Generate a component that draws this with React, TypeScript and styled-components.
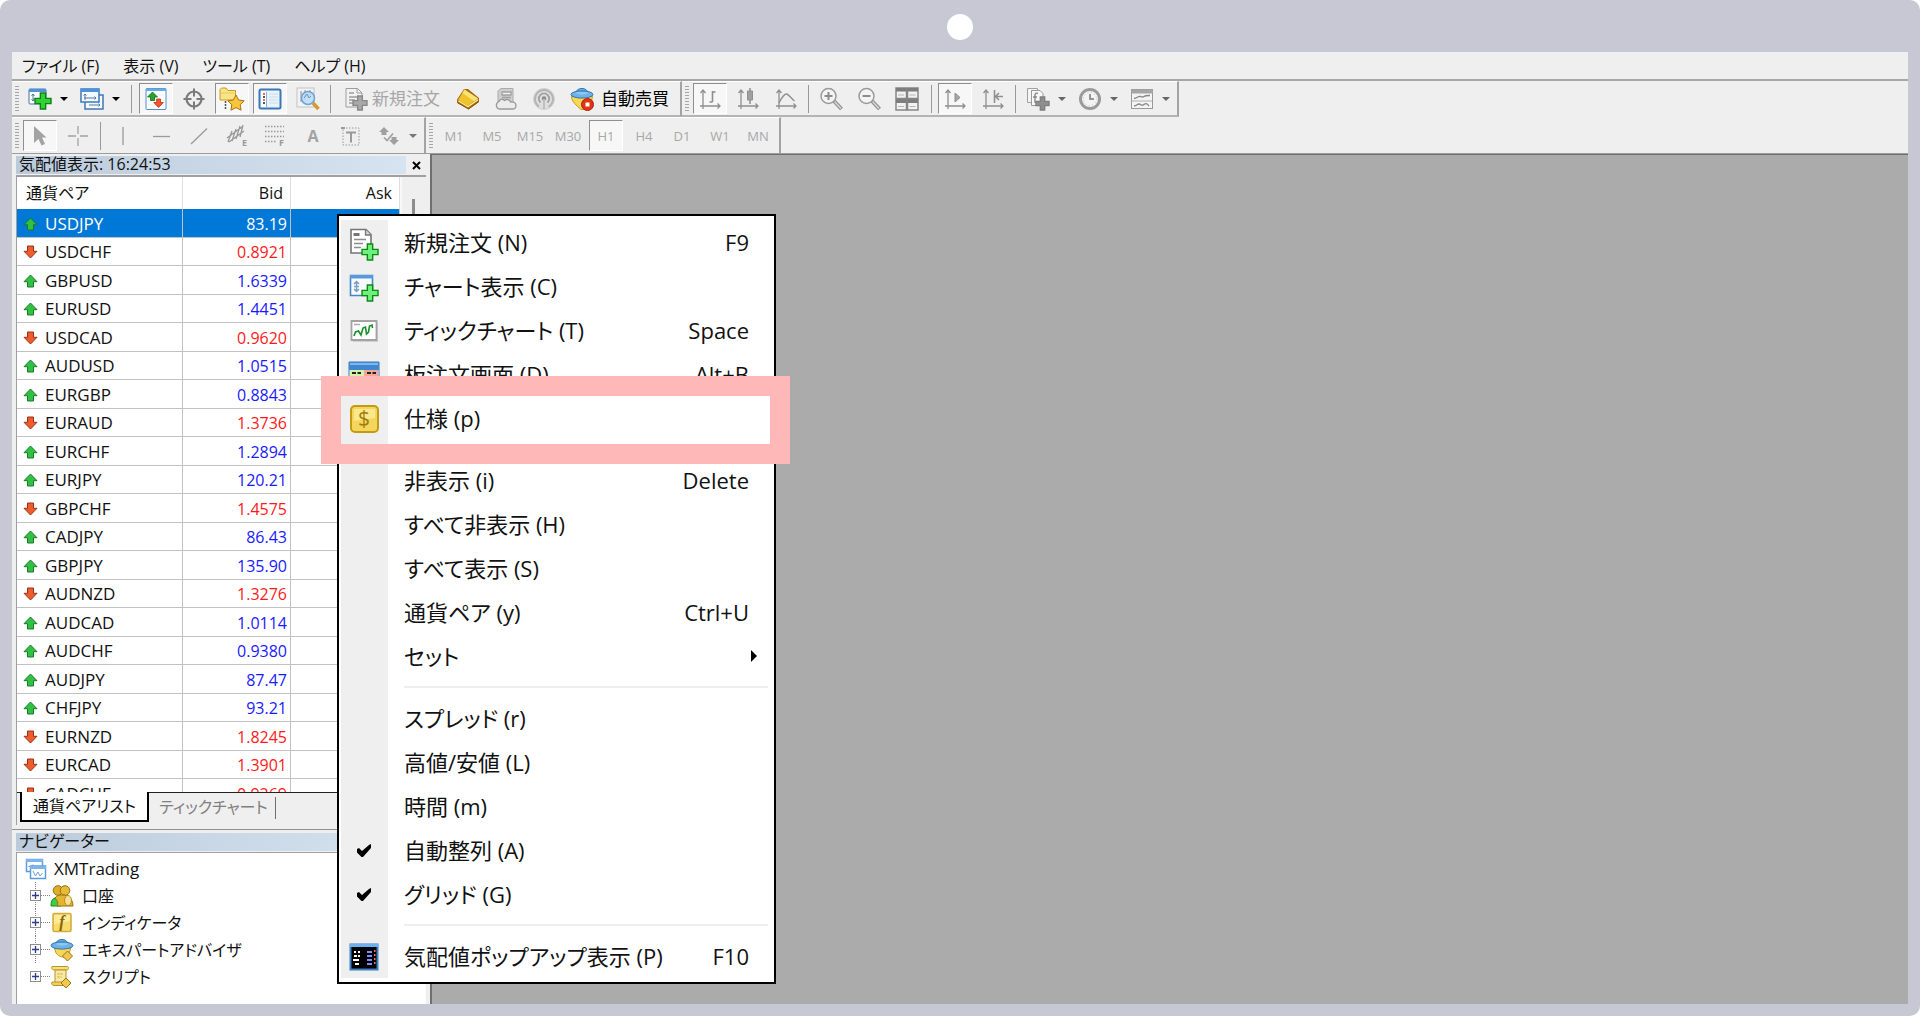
import React from "react";
import styled, { createGlobalStyle } from "styled-components";

const GlobalStyle = createGlobalStyle`
  *, *::before, *::after { box-sizing: border-box; }
  body {
    margin: 0;
    background: #ffffff;
    color: #111111;
    font-family: "Open Sans", "Noto Sans CJK JP", sans-serif;
    font-feature-settings: "palt";
  }
  button {
    font: inherit;
    font-feature-settings: inherit;
    color: inherit;
    background: none;
    border: 0;
    padding: 0;
    margin: 0;
    white-space: nowrap;
  }
  ul { list-style: none; margin: 0; padding: 0; }
  svg { display: block; flex: none; overflow: visible; }
`;

/* ---------- frame ---------- */

const Frame = styled.div`
  display: flex;
  flex-direction: column;
  height: 100vh;
  min-height: 640px;
  padding: 0 12px 12px;
  background: #c8c7d4;
  border-radius: 10px;
`;

const Bezel = styled.div`
  flex: none;
  display: flex;
  align-items: center;
  justify-content: center;
  height: 52px;
  padding-top: 2px;
`;

const Camera = styled.span`
  width: 26px;
  height: 26px;
  border-radius: 50%;
  background: #ffffff;
`;

const Screen = styled.div`
  flex: 1;
  min-height: 0;
  display: flex;
  flex-direction: column;
  background: #efefef;
`;

/* ---------- menu bar and toolbars ---------- */

const MenuBar = styled.nav`
  flex: none;
  display: flex;
  gap: 4px;
  height: 29px;
  border-bottom: 2px solid #a6a6a6;
`;

const MenuBarButton = styled.button`
  padding: 0 10px;
  font-size: 16px;
  line-height: 26px;
`;

const ToolRow = styled.div`
  flex: none;
  display: flex;
  height: 36px;
`;

const ToolGroup = styled.div`
  display: flex;
  align-items: center;
  gap: 4px;
  padding: 0 4px 0 3px;
  border-top: 1px solid #ffffff;
  border-right: 2px solid #a3a3a3;
  border-bottom: 2px solid #b4b4b4;
`;

const LowerToolGroup = styled(ToolGroup)`
  border-bottom: 0;
`;

const Grip = styled.span`
  width: 4px;
  height: 26px;
  background: repeating-linear-gradient(to bottom, #a6a6a6 0 1px, #efefef 1px 3px);
`;

const Divider = styled.span<{ $width?: number }>`
  display: flex;
  justify-content: center;
  width: ${(p) => p.$width ?? 3}px;
  height: 28px;

  &::before {
    content: "";
    width: 1px;
    background: #989898;
  }
`;

const ToolButton = styled.button<{ $pressed?: boolean }>`
  display: flex;
  align-items: center;
  justify-content: center;
  width: 34px;
  height: 31px;
  font-size: 13px;
  color: #a8a8a8;
  border: 1px solid transparent;
  ${(p) =>
    p.$pressed &&
    `
    background: #f7f7f7;
    border-color: #8f8f8f #ffffff #ffffff #8f8f8f;
  `}
`;

const WideToolButton = styled.button<{ $disabled?: boolean }>`
  display: flex;
  align-items: center;
  gap: ${(p) => (p.$disabled ? 4 : 7)}px;
  height: 31px;
  padding: 0 7px 0 ${(p) => (p.$disabled ? 8 : 5)}px;
  font-size: 17px;
  line-height: 24px;
  color: ${(p) => (p.$disabled ? "#a6a6a6" : "#000000")};
`;

const Split = styled.span`
  display: flex;
`;

const SplitArrow = styled.button`
  display: flex;
  align-items: center;
  justify-content: center;
  width: 14px;
  height: 31px;
`;

/* ---------- work area ---------- */

const WorkArea = styled.main`
  position: relative;
  flex: 1;
  min-height: 0;
  display: flex;
  border-top: 1px solid #9c9c9c;
`;

const SidePanel = styled.aside`
  flex: none;
  width: 418px;
  display: flex;
  flex-direction: column;
  min-height: 0;
`;

const Desktop = styled.section`
  flex: 1;
  background: #ababab;
  border-top: 1px solid #6f6f6f;
  border-left: 2px solid #6f6f6f;
`;

const MarketWatch = styled.section`
  flex: 1;
  min-height: 0;
  display: flex;
  flex-direction: column;
  padding: 2px 4px 4px;
  border-bottom: 1px solid #909090;
`;

const Navigator = styled.section`
  flex: none;
  display: flex;
  flex-direction: column;
  height: 174px;
  padding: 3px 4px 0;
`;

const PanelTitle = styled.header`
  flex: none;
  display: flex;
  height: 18px;
  margin-bottom: 1px;
  font-size: 16px;
  line-height: 16px;
`;

const TitleText = styled.h2`
  flex: 1;
  margin: 0;
  padding-left: 3px;
  font-size: inherit;
  font-weight: 400;
  white-space: nowrap;
  background: linear-gradient(to right, #bccbdb, #d6e4f1);
`;

const CloseButton = styled.button`
  display: flex;
  align-items: center;
  justify-content: center;
  width: 20px;
`;

const WatchBody = styled.div`
  flex: 1;
  min-height: 0;
  display: flex;
  overflow: hidden;
  border-top: 2px solid #a0a0a0;
  border-left: 1px solid #a0a0a0;
`;

const QuoteTable = styled.table`
  width: 383px;
  align-self: flex-start;
  table-layout: fixed;
  border-collapse: separate;
  border-spacing: 0;
  background: #ffffff;
  font-size: 16px;
  line-height: 24px;
`;

const HeadCell = styled.th<{ $right?: boolean }>`
  height: 32px;
  padding: 0 7px 0 9px;
  font-weight: 400;
  text-align: ${(p) => (p.$right ? "right" : "left")};
  border-right: 1px solid #dedede;
`;

const QuoteRow = styled.tr<{ $selected?: boolean }>`
  height: 29px;
  background: ${(p) => (p.$selected ? "#0078d7" : "#ffffff")};

  &:nth-child(even) { height: 28px; }

  td {
    padding: 1px 0 0;
    border-right: 1px solid #c2c2c2;
    border-bottom: 1px solid #c2c2c2;
  }
`;

const SymbolBox = styled.span<{ $selected?: boolean }>`
  display: flex;
  align-items: center;
  gap: 7px;
  padding-left: 6px;
  font-size: 17px;
  color: ${(p) => (p.$selected ? "#ffffff" : "#111111")};
`;

const Price = styled.td<{ $tone: "up" | "down" | "selected" }>`
  && { padding-right: 3px; }
  text-align: right;
  color: ${(p) => ({ up: "#1a1aff", down: "#ff1a1a", selected: "#ffffff" })[p.$tone]};
`;

const ScrollTrack = styled.div`
  flex: 1;
  display: flex;
  justify-content: center;
  padding: 22px 2px 0 0;
  border-left: 2px solid #f8f8f8;
  background: #efefef;

  &::before {
    content: "";
    width: 3px;
    height: 120px;
    background: #8c8c8c;
  }
`;

const Tabs = styled.div`
  flex: none;
  display: flex;
  height: 33px;
  padding-left: 3px;
  border-left: 1px solid #a0a0a0;
  background: linear-gradient(#222222, #222222) top / 100% 1px no-repeat;
  font-size: 16px;
  line-height: 24px;
`;

const Tab = styled.button<{ $active?: boolean }>`
  width: 129px;
  height: 30px;
  color: ${(p) => (p.$active ? "#111111" : "#808080")};
  ${(p) =>
    p.$active &&
    `
    background: #ffffff;
    border: solid #000000;
    border-width: 0 2px 2px;
  `}
`;

const TabEnd = styled.span`
  width: 1px;
  height: 22px;
  margin-top: 5px;
  margin-left: -3px;
  background: #707070;
`;

const TreeBox = styled.div`
  flex: 1;
  min-height: 0;
  padding: 2px 0 0 7px;
  background: #ffffff;
  border-top: 1px solid #a0a0a0;
  border-left: 1px solid #a0a0a0;
  border-right: 1px solid #fafafa;
`;

const TreeButton = styled.button<{ $root?: boolean }>`
  display: flex;
  align-items: center;
  height: 27px;
  font-size: ${(p) => (p.$root ? 17 : 16)}px;
  line-height: 24px;
`;

const TreeIcon = styled.span<{ $root?: boolean }>`
  display: flex;
  justify-content: center;
  width: 24px;
  margin-right: ${(p) => (p.$root ? 6 : 8)}px;
`;

const Branch = styled.li`
  display: flex;
  align-items: center;
  margin-left: 11px;
  border-left: 1px dotted #808080;

  &:last-child { border-left-color: transparent; }
`;

const Expander = styled.span`
  display: flex;
  align-items: center;
  justify-content: center;
  width: 11px;
  height: 11px;
  margin-left: -6px;
  border: 1px solid #8f8f8f;
  background: #ffffff;
`;

const Twig = styled.span`
  width: 9px;
  border-top: 1px dotted #808080;
`;

/* ---------- context menu ---------- */

const ContextMenu = styled.div`
  position: absolute;
  left: 325px;
  top: 60px;
  width: 439px;
  padding: 4px 2px;
  background: #ffffff;
  border: 2px solid #000000;
`;

const MenuList = styled.ul`
  background: linear-gradient(to right, #efefef 47px, #ffffff 47px);
`;

const MenuItemButton = styled.button<{ $sub?: boolean }>`
  display: flex;
  align-items: center;
  width: 100%;
  height: 44px;
  padding-right: ${(p) => (p.$sub ? 14 : 23)}px;
  font-size: 22px;
  line-height: 32px;
  text-align: left;
`;

const MenuIcon = styled.span`
  display: flex;
  align-items: center;
  justify-content: center;
  width: 46px;
  padding-top: 2px;
  margin-right: 17px;
`;

const MenuLabel = styled.span`
  flex: 1;
`;

const Shortcut = styled.kbd`
  font-family: inherit;
  font-size: 22px;
`;

const MenuRule = styled.li`
  height: 18px;
  padding: 8px 4px 0 63px;

  &::before {
    content: "";
    display: block;
    height: 2px;
    background: #efefef;
  }
`;

const Highlight = styled.div`
  position: absolute;
  left: -18px;
  top: 160px;
  width: 469px;
  height: 88px;
  border: 20px solid #ffb8b8;
  pointer-events: none;
`;

/* ---------- drawings ---------- */

const Caret = ({ color = "#000" }: { color?: string }) => (
  <svg width="8" height="4" viewBox="0 0 8 4"><path d="M0 0h8L4 4z" fill={color} /></svg>
);

const I = ({ children, w = 24, h = 24 }: { children: React.ReactNode; w?: number; h?: number }) => (
  <svg width={w} height={h} viewBox={`0 0 ${w} ${h}`} fill="none" aria-hidden="true">{children}</svg>
);

const plus = (x: number, y: number, s: number, fill: string, line: string) => {
  const t = s / 3;
  return (
    <path
      transform={`translate(${x} ${y})`}
      d={`M${t} 0h${t}v${t}h${t}v${t}h${-t}v${t}h${-t}v${-t}h${-t}v${-t}h${t}z`}
      fill={fill}
      stroke={line}
      strokeWidth="1.4"
    />
  );
};

const NewChartIcon = () => (
  <I>
    <rect x="1" y="2" width="17" height="15" rx="1" fill="#fff" stroke="#3b78b8" />
    <path d="M1 2h17v3H1z" fill="#4f92d6" />
    <path d="M5 14V7M3.500 9L5 7l1.500 2M3.500 12.500L5 14l1.500-1.500M5 12h6" stroke="#54779c" />
    {plus(7, 6, 16, "#2fd432", "#11801a")}
  </I>
);
const WindowsIcon = () => (
  <I>
    <path d="M5 8h18v14H5z" fill="#f4f9ff" stroke="#3b78b8" strokeWidth="1.500" />
    <rect x="1" y="2" width="18" height="13" fill="#f4f9ff" stroke="#3b78b8" strokeWidth="1.500" />
    <path d="M1 2h18v3H1z" fill="#4f92d6" />
    <path d="M5 13V7M3.500 8.500L5 7l1.500 1.500M4 11h12M14.500 9.500L16 11l-1.500 1.500M9 18h11M18.500 16.500L20 18l-1.500 1.500" stroke="#54779c" />
  </I>
);
const QuotesIcon = () => (
  <I>
    <rect x="2" y="1.500" width="20" height="21" rx="1" fill="#fff" stroke="#4a8fd0" />
    <path d="M2 1.500h20v2.500H2z" fill="#69a9e4" />
    <path d="M4 8h16M4 13h16M4 18h16" stroke="#ececf4" />
    <path d="M8.500 5l5 5h-3v3.500h-4V10h-3z" fill="#25a52c" stroke="#12701a" strokeWidth=".8" />
    <path d="M14.500 20.500L9.800 15.500h2.900V12h3.800v3.500h2.900z" fill="#f4552a" stroke="#c0310d" strokeWidth=".8" />
  </I>
);
const TargetIcon = () => (
  <I>
    <circle cx="12" cy="12" r="7.500" stroke="#7a7a7a" strokeWidth="2.200" />
    <path d="M12 1.500v8M12 14.500v8M1.500 12h8M14.500 12h8" stroke="#7a7a7a" strokeWidth="2" />
  </I>
);
const FavoritesIcon = () => (
  <I w={26}>
    <path d="M1 13V2.500L2.500 1H7l2 2.500h7.500V13z" fill="#fbe389" stroke="#c99b1c" />
    <path d="M1.500 6h15" stroke="#e8c95c" />
    <path d="M6.500 14v9" stroke="#555" strokeWidth="1.500" strokeDasharray="2 1" />
    <path
      d="M17 8l2.600 5 5.600.8-4 3.900.9 5.500-5.100-2.600-5.100 2.600.9-5.500-4-3.900 5.600-.8z"
      fill="#f8c63d"
      stroke="#a9750d"
    />
  </I>
);
const PanelIcon = () => (
  <I>
    <rect x="1.500" y="2.500" width="21" height="19" rx="1.500" fill="#e9f3fd" stroke="#3b78b8" strokeWidth="2" />
    <path d="M3 4h5v16H3z" fill="#fff" />
    <path d="M8.500 5v15" stroke="#86b1dc" />
    <path d="M5 7h2M5 13h2" stroke="#e33" strokeWidth="1.500" />
    <path d="M5 10h2M5 16h2" stroke="#222" strokeWidth="1.500" />
    <path d="M11 7h9M11 10h9M11 13h9M11 16h9" stroke="#c9dced" />
  </I>
);
const TesterIcon = () => (
  <I w={26} h={26}>
    <rect x="2" y="2" width="17" height="19" fill="#f3f3f3" stroke="#c2c2c2" />
    <path d="M6 16V5M10 14V4M15 10V4" stroke="#8c8c8c" />
    <circle cx="13" cy="12" r="6.500" fill="#b9dcf7" fillOpacity=".85" stroke="#6ea3d2" strokeWidth="1.500" />
    <path d="M9 12l3-4 2 4 2-2" stroke="#5f93c2" />
    <path d="M18 17l5.500 6" stroke="#d59a2b" strokeWidth="3.500" />
  </I>
);
const GreyOrderIcon = () => (
  <I>
    <path d="M2 1.500h11.500L18 6v14H2z" fill="#f2f2f2" stroke="#9d9d9d" />
    <path d="M13 1.500V6h5" stroke="#9d9d9d" />
    <path d="M5 6h5M5 10h9M5 13h6M5 16h5" stroke="#9d9d9d" strokeWidth="1.400" />
    {plus(9, 9, 14, "#a9a9a9", "#888888")}
  </I>
);
const GoldIcon = () => (
  <I>
    <path d="M1 12.500L8 2h4l11 9v4l-10.500 7.500L1 15.500z" fill="#a8690c" />
    <path d="M2 13L8.500 2.500 22 11.500 12 19z" fill="#f0c22c" />
    <path d="M8.500 2.500L22 11.500l-4 2.800L6.500 6z" fill="#fbe377" />
    <path d="M2.500 14L12 19.800l10-7" stroke="#fff0a4" strokeWidth="1.200" />
    <path d="M1.500 15.800l11 6 10-7" stroke="#8e5606" />
  </I>
);
const CloudServerIcon = () => (
  <I>
    <path d="M4 4l3-2.500h12V15H4z" fill="#cfcfcf" stroke="#ababab" />
    <path d="M8 5h9v3H8zM8 10.500h9" fill="#f4f4f4" stroke="#a0a0a0" strokeWidth="1.300" />
    <path d="M5 22a4 4 0 010-7.500c.8-2.500 4-3 5.500-1 2-1.800 5.500-1 6 1.500 3-.6 5.500.7 5.500 3.500 0 2-1.500 3.500-3.500 3.500z" fill="#ececec" stroke="#9a9a9a" strokeWidth="1.300" />
  </I>
);
const SignalIcon = () => (
  <I>
    <circle cx="12" cy="12" r="10.500" fill="#dedede" stroke="#cfcfcf" />
    <path d="M7 19.500a9 9 0 119.500.3" stroke="#b4b4b4" strokeWidth="1.800" />
    <path d="M8.500 15.500a5.200 5.200 0 117 0" stroke="#a0a0a0" strokeWidth="1.800" />
    <circle cx="12" cy="11.500" r="2.200" fill="#8c8c8c" />
    <path d="M12 12v10" stroke="#c0c0c0" strokeWidth="2" />
  </I>
);
const hat = (
  <>
    <path d="M6 6c0-3 3-4.500 6-4.500S17.500 3 18 6z" fill="#6cb0e6" stroke="#2d73ae" />
    <ellipse cx="12" cy="7.500" rx="11" ry="3.600" fill="#6fb2e8" stroke="#2d73ae" />
    <path d="M6.500 6.500c3 1.500 8 1.500 11 0V5h-11z" fill="#8cc8f4" />
  </>
);
const AutoTradeIcon = () => (
  <I>
    <path d="M1.500 9.500c0 5 5 9 9.500 13h4c3-3 7-8 7.500-13z" fill="#f7d758" stroke="#c19a24" />
    {hat}
    <circle cx="17.500" cy="17.500" r="6" fill="#e03412" stroke="#b31f05" />
    <path d="M15.500 15.500h4v4h-4z" fill="#fff" />
  </I>
);

const g = "#8f8f8f";
const axes = <path d="M5 22V3M2.500 6L5 3l2.500 3M2 19h20M19.500 16.500L22 19l-2.500 2.500" stroke={g} strokeWidth="1.300" />;
const BarsIcon = () => <I>{axes}<path d="M14.500 4v11M14.500 5h3M11.500 15h3" stroke={g} strokeWidth="1.600" /></I>;
const CandlesIcon = () => <I>{axes}<path d="M14 1v16" stroke={g} strokeWidth="1.500" /><path d="M11.500 4h5v9h-5z" fill="#a0a0a0" stroke={g} /></I>;
const LineIcon = () => <I>{axes}<path d="M5 16c3-6 5-9 7.500-9 2 0 4 4 8 7" stroke={g} strokeWidth="1.400" /></I>;
const lens = (
  <>
    <path d="M15 14l7.500 8" stroke={g} strokeWidth="4" />
    <path d="M15.500 14.500l6.500 7" stroke="#d8d8d8" strokeWidth="1.500" />
    <circle cx="9.500" cy="9" r="7.500" fill="#f4f4f4" stroke="#9a9a9a" strokeWidth="1.500" />
  </>
);
const ZoomInIcon = () => <I>{lens}<path d="M9.500 5v8M5.500 9h8" stroke="#8c8c8c" strokeWidth="2" /></I>;
const ZoomOutIcon = () => <I>{lens}<path d="M5.500 9h8" stroke="#8c8c8c" strokeWidth="2" /></I>;
const TilesIcon = () => (
  <I>
    {[1, 12.5].map((x) => [1, 12.5].map((y) => (
      <g key={`${x}-${y}`}>
        <path d={`M${x} ${y}h10.500v10.500h-10.500z`} fill="#f2f2f2" stroke="#868686" strokeWidth="1.500" />
        <path d={`M${x} ${y}h10.500v3.500h-10.500z`} fill="#7d7d7d" />
        <path d={`M${x + 2} ${y + 7}h6`} stroke="#b4b4b4" />
      </g>
    )))}
  </I>
);
const ScrollIcon = () => <I>{axes}<path d="M12 6v9l5-4.500z" fill="#a5a5a5" stroke={g} /></I>;
const ShiftIcon = () => <I>{axes}<path d="M13.500 3v13M22 9.500h-7M18 6l-3.500 3.500L18 13" stroke={g} strokeWidth="1.600" /></I>;
const IndicatorsIcon = () => (
  <I>
    <path d="M1.500 1.500h10v14h-10z" fill="#f4f4f4" stroke="#a0a0a0" />
    <path d="M5.500 3.500H14l3 3v12H5.500z" fill="#f8f8f8" stroke="#999" />
    <path d="M12 6.500c-2-1-3 0-3 2V16M7 10h4" stroke="#888" strokeWidth="1.400" />
    {plus(10, 10, 13, "#8f8f8f", "#7f7f7f")}
  </I>
);
const ClockIcon = () => (
  <I>
    <circle cx="12" cy="12" r="9.500" fill="#f4f4f4" stroke="#9a9a9a" strokeWidth="3" />
    <circle cx="12" cy="12" r="6.500" stroke="#bbb" strokeDasharray="1 2.400" />
    <path d="M12 7v5h4" stroke="#777" strokeWidth="1.500" />
  </I>
);
const TemplatesIcon = () => (
  <I>
    <rect x="1.500" y="2.500" width="21" height="19" fill="#f4f4f4" stroke="#999" />
    <path d="M1.500 2.500h21v4h-21z" fill="#a6a6a6" />
    <path d="M2 14h20" stroke="#b0b0b0" />
    <path d="M4 11.500c3 0 4-2.500 6-2s3 1 4 0 3-1 6-1M4 19c3 0 3-2 5-2s2 2 4 1 3-3 6 1" stroke="#888" strokeWidth="1.300" />
  </I>
);

const CursorIcon = () => <I><path d="M6 2v17l4.500-4 3 6.500 3.500-1.500-3-6.500h4.500z" fill="#a3a3a3" /></I>;
const CrossIcon = () => <I><path d="M12 2v8M12 14v8M2 12h8M14 12h8" stroke="#a3a3a3" strokeWidth="1.300" /></I>;
const VLineIcon = () => <I><path d="M12 3v18" stroke="#9a9a9a" strokeWidth="1.300" /></I>;
const HLineIcon = () => <I><path d="M4 12.500h17" stroke="#9a9a9a" strokeWidth="1.300" /></I>;
const TrendIcon = () => <I><path d="M4 20L20 4.500" stroke="#9a9a9a" strokeWidth="1.300" /></I>;
const Letter = styled.text`
  font: 700 9px "Open Sans", sans-serif;
  fill: #999999;
`;
const ChannelIcon = () => (
  <I>
    <path d="M2 14L17 3M4 18L19 7M7 7L3 18M11 5L7 17M15 2l-4 13M18 1l-3 12" stroke="#999" strokeWidth="1.300" />
    <Letter x="17" y="22">E</Letter>
  </I>
);
const FiboIcon = () => (
  <I>
    <path d="M2 2.500h19M2 7.500h19M2 12.500h19M2 17.500h12" stroke="#999" strokeWidth="1.500" strokeDasharray="1.500 1.500" />
    <Letter x="16" y="22">F</Letter>
  </I>
);
const GlyphA = styled.span`
  font: 700 16px "Open Sans", sans-serif;
  color: #a3a3a3;
`;
const LabelIcon = () => (
  <I>
    <rect x="4" y="4" width="16" height="17" stroke="#999" strokeDasharray="1.500 1.500" />
    <path d="M2 3h4v2H2z" fill="#999" />
    <path d="M7 8.500h10M12 8.500v10" stroke="#9a9a9a" strokeWidth="2" />
  </I>
);
const ShapesIcon = () => (
  <I>
    <path d="M7 3l5 5h-2.500v3h-5V8H2z" fill="#a0a0a0" />
    <path d="M7 13.500l3 3 6-7" stroke="#a0a0a0" strokeWidth="1.600" />
    <path d="M17 21l-5-5h2.500v-3h5v3H22z" fill="#a0a0a0" />
  </I>
);

const Trend = ({ up }: { up: boolean }) => (
  <svg width="15" height="14" viewBox="0 0 15 14" role="img" aria-label={up ? "up" : "down"}>
    {up ? (
      <path d="M7.500 1L14 7.700h-3.500V13h-6V7.700H1z" fill="#2fc044" stroke="#1b7a26" />
    ) : (
      <path d="M7.500 13L1 6.300h3.500V1h6v5.300H14z" fill="#ee5c2e" stroke="#973218" />
    )}
  </svg>
);

/* context menu drawings */
const MenuOrderIcon = () => (
  <I w={30} h={36}>
    <path d="M2 4.500h15l5 5V27l-1 1H2z" fill="#fff" stroke="#757575" strokeWidth="1.600" />
    <path d="M16.500 4.500V10H22" fill="#d5d5d5" stroke="#757575" strokeWidth="1.300" />
    <path d="M4.500 9.500h6" stroke="#757575" strokeWidth="3" />
    <path d="M5 14.500h12M5 18.500h9M5 22.500h7" stroke="#8d8d8d" strokeWidth="1.500" />
    {plus(13, 19, 16, "#6df07c", "#0c8a16")}
  </I>
);
const MenuChartIcon = () => (
  <I w={30} h={36}>
    <path d="M1.500 6.500h22v20h-22z" fill="#f7fbff" stroke="#4785c4" strokeWidth="1.600" />
    <path d="M1 6h23v3.500H1z" fill="#5a9ada" />
    <path d="M7.500 22v-9M5 15l2.500-2.500L10 15M5 20l2.500 2.500L10 20M5 17.500h5" stroke="#7c9cc0" strokeWidth="1.500" />
    {plus(13, 16, 16, "#6df07c", "#0c8a16")}
  </I>
);
const MenuTickIcon = () => (
  <I w={30}>
    <path d="M4 3h25v20H4z" fill="#d2d2d2" />
    <path d="M2.500 2h25v19h-25z" fill="#fff" stroke="#a3a3a3" strokeWidth="1.800" />
    <path d="M5 5.500h6" stroke="#aaa" strokeWidth="1.500" />
    <path d="M5 17l1.500-4 3-1 2.500 4 2-7 2.500-1 1 7 2-2 1-6 2.500-1 .5 3" stroke="#15902a" strokeWidth="1.600" />
  </I>
);
const MenuDepthIcon = () => (
  <I w={32} h={28}>
    <path d="M1 1h30v26H1z" fill="#fff" stroke="#3a76b4" />
    <path d="M1 1h30v8H1z" fill="#3f87cf" />
    <path d="M2 2h28v2H2z" fill="#7fb8ee" />
    <path d="M2 9h14v18H2z" fill="#d5f2a9" />
    <path d="M16 9h14v18H16z" fill="#f6a698" />
    <path d="M4 12h9M19 12h9" stroke="#222" strokeWidth="2" strokeDasharray="4 1.500" />
  </I>
);
const Dollar = styled.text`
  font: 400 21px "Open Sans", sans-serif;
  fill: #a07c0a;
`;
const MenuSpecIcon = () => (
  <I w={30} h={30}>
    <rect x="2" y="2" width="27" height="26" rx="4" fill="#f4d65c" stroke="#c49a10" strokeWidth="2" />
    <path d="M5 5h21v9L5 17z" fill="#fae88f" />
    <Dollar x="15" y="22" textAnchor="middle">$</Dollar>
  </I>
);
const MenuPopupIcon = () => (
  <I w={30} h={28}>
    <path d="M1.500 1.500h27v25h-27z" fill="#000" stroke="#3f7fc4" strokeWidth="2" />
    <path d="M1 1h28v3H1z" fill="#6db0ee" />
    <path d="M5 9h2M9 9h2M5 13h3M9 13h2M4 17h6M6 21h4" stroke="#fff" strokeWidth="2" />
    <path d="M18 9h5M18 13h5M18 17h5M18 21h5" stroke="#7d8cff" strokeWidth="2" />
    <path d="M25 8h1.500M25 12h1.500M25 16h1.500M25 20h1.500" stroke="#ff6a5a" strokeWidth="2" />
  </I>
);
const CheckIcon = () => (
  <I w={14} h={14}><path d="M0 5l2-1 3 3L12 1l2-1v4l-8 9H4.500L0 8.500z" fill="#000" /></I>
);
const SubmenuIcon = () => (
  <I w={7} h={12}><path d="M0 0l6 6-6 6z" fill="#000" /></I>
);

/* tree drawings */
const RootIcon = () => (
  <I w={22} h={22}>
    <path d="M1.500 1.500h16v12h-16z" fill="#fff" stroke="#5a9be0" strokeWidth="1.500" />
    <path d="M1 1h17v3H1z" fill="#7db4ee" />
    <path d="M3.500 8.500h3l1.500-2" stroke="#5a9be0" />
    <path d="M5.500 8h15v12.500h-15z" fill="#fff" stroke="#5a9be0" strokeWidth="1.500" />
    <path d="M5 8h16v3H5z" fill="#7db4ee" />
    <path d="M8 13l2.500 5 2.500-4 2 4 2.500-3" stroke="#6ba0d6" />
  </I>
);
const AccountsIcon = () => (
  <I h={22}>
    <path d="M1 21c0-6 2-8 5-8s5 2 5 8z" fill="#3ccc45" stroke="#168c20" />
    <circle cx="8" cy="5.500" r="4.800" fill="#dcae2c" stroke="#97700f" />
    <circle cx="15" cy="5.500" r="4.800" fill="#e6bb38" stroke="#97700f" />
    <path d="M7 21c2-2 0-6-2-8 2-3 5-3 8-3 5 0 10 4 10 11z" fill="#e3b533" stroke="#97700f" />
    <ellipse cx="18" cy="15.500" rx="3.500" ry="5" fill="#f7e093" stroke="#b18a20" />
  </I>
);
const Italic = styled.text`
  font: italic 700 16px "Liberation Serif", serif;
  fill: #8a6508;
`;
const FunctionIcon = () => (
  <I w={22} h={22}>
    <rect x="2" y="1.500" width="18" height="18" rx="1.500" fill="#f7db6c" stroke="#d2ab38" strokeWidth="1.500" />
    <path d="M3 3h16v6L3 12z" fill="#fbeb9e" />
    <Italic x="11" y="15" textAnchor="middle">f</Italic>
  </I>
);
const ExpertIcon = () => (
  <I>
    <path d="M4 9l2 6c3 4 8 5 12 4l3-10z" fill="#f7d758" stroke="#c19a24" />
    {hat}
    <path d="M17.500 13l5 5-5 5-5-5z" fill="#f0c750" stroke="#9c7413" />
  </I>
);
const ScriptIcon = () => (
  <I>
    <path d="M2 1.500h15c2 0 2 3 0 3.500H5c-3 0-4-2-3-3.500z" fill="#f7df82" stroke="#bb9426" />
    <path d="M5 5h11v13H5z" fill="#f9e8a0" stroke="#bb9426" />
    <path d="M7.500 9h6M7.500 12h4" stroke="#c2a044" strokeDasharray="2 1" />
    <path d="M2 17h13v3.500H4c-2 0-3-2-2-3.500z" fill="#f0cf60" stroke="#bb9426" />
    <path d="M16 13l5 5-5 5-5-5z" fill="#f0c750" stroke="#9c7413" />
  </I>
);

/* ---------- data ---------- */

const quotes: [string, string, boolean][] = [
  ["USDJPY", "83.19", true],
  ["USDCHF", "0.8921", false],
  ["GBPUSD", "1.6339", true],
  ["EURUSD", "1.4451", true],
  ["USDCAD", "0.9620", false],
  ["AUDUSD", "1.0515", true],
  ["EURGBP", "0.8843", true],
  ["EURAUD", "1.3736", false],
  ["EURCHF", "1.2894", true],
  ["EURJPY", "120.21", true],
  ["GBPCHF", "1.4575", false],
  ["CADJPY", "86.43", true],
  ["GBPJPY", "135.90", true],
  ["AUDNZD", "1.3276", false],
  ["AUDCAD", "1.0114", true],
  ["AUDCHF", "0.9380", true],
  ["AUDJPY", "87.47", true],
  ["CHFJPY", "93.21", true],
  ["EURNZD", "1.8245", false],
  ["EURCAD", "1.3901", false],
  ["CADCHF", "0.9269", false],
];

type Entry = { label: string; keys?: string; icon?: React.ReactNode; sub?: boolean };

const entries: (Entry | null)[] = [
  { label: "新規注文 (N)", keys: "F9", icon: <MenuOrderIcon /> },
  { label: "チャート表示 (C)", icon: <MenuChartIcon /> },
  { label: "ティックチャート (T)", keys: "Space", icon: <MenuTickIcon /> },
  { label: "板注文画面 (D)", keys: "Alt+B", icon: <MenuDepthIcon /> },
  { label: "仕様 (p)", icon: <MenuSpecIcon /> },
  null,
  { label: "非表示 (i)", keys: "Delete" },
  { label: "すべて非表示 (H)" },
  { label: "すべて表示 (S)" },
  { label: "通貨ペア (y)", keys: "Ctrl+U" },
  { label: "セット", sub: true },
  null,
  { label: "スプレッド (r)" },
  { label: "高値/安値 (L)" },
  { label: "時間 (m)" },
  { label: "自動整列 (A)", icon: <CheckIcon /> },
  { label: "グリッド (G)", icon: <CheckIcon /> },
  null,
  { label: "気配値ポップアップ表示 (P)", keys: "F10", icon: <MenuPopupIcon /> },
];

const tree: [string, React.ReactNode][] = [
  ["口座", <AccountsIcon />],
  ["インディケータ", <FunctionIcon />],
  ["エキスパートアドバイザ", <ExpertIcon />],
  ["スクリプト", <ScriptIcon />],
];

const Tool = ({ name, pressed, children }: { name: string; pressed?: boolean; children: React.ReactNode }) => (
  <ToolButton type="button" aria-label={name} aria-pressed={pressed} $pressed={pressed}>
    {children}
  </ToolButton>
);

const SplitTool = ({ name, color, children }: { name: string; color?: string; children: React.ReactNode }) => (
  <Split>
    <Tool name={name}>{children}</Tool>
    <SplitArrow type="button" aria-label={`${name} options`}><Caret color={color} /></SplitArrow>
  </Split>
);

export default function App() {
  return (
    <>
      <GlobalStyle />
      <Frame lang="ja">
        <Bezel><Camera /></Bezel>
        <Screen>
          <MenuBar>
            {["ファイル (F)", "表示 (V)", "ツール (T)", "ヘルプ (H)"].map((m) => (
              <MenuBarButton key={m} type="button">{m}</MenuBarButton>
            ))}
          </MenuBar>

          <ToolRow>
            <ToolGroup>
              <Grip />
              <SplitTool name="New chart"><NewChartIcon /></SplitTool>
              <SplitTool name="Profiles"><WindowsIcon /></SplitTool>
              <Divider $width={8} />
              <Tool name="Market watch" pressed><QuotesIcon /></Tool>
              <Tool name="Data window"><TargetIcon /></Tool>
              <Tool name="Navigator" pressed><FavoritesIcon /></Tool>
              <Tool name="Terminal" pressed><PanelIcon /></Tool>
              <Tool name="Strategy tester"><TesterIcon /></Tool>
              <Divider />
              <WideToolButton type="button" $disabled><GreyOrderIcon />新規注文</WideToolButton>
              <Tool name="MetaEditor"><GoldIcon /></Tool>
              <Tool name="Virtual hosting"><CloudServerIcon /></Tool>
              <Tool name="Signals"><SignalIcon /></Tool>
              <WideToolButton type="button"><AutoTradeIcon />自動売買</WideToolButton>
            </ToolGroup>
            <ToolGroup>
              <Grip />
              <Tool name="Bar chart" pressed><BarsIcon /></Tool>
              <Tool name="Candlesticks"><CandlesIcon /></Tool>
              <Tool name="Line chart"><LineIcon /></Tool>
              <Divider />
              <Tool name="Zoom in"><ZoomInIcon /></Tool>
              <Tool name="Zoom out"><ZoomOutIcon /></Tool>
              <Tool name="Tile windows"><TilesIcon /></Tool>
              <Divider $width={6} />
              <Tool name="Auto scroll" pressed><ScrollIcon /></Tool>
              <Tool name="Chart shift"><ShiftIcon /></Tool>
              <Divider />
              <SplitTool name="Indicators" color="#666"><IndicatorsIcon /></SplitTool>
              <SplitTool name="Periods" color="#666"><ClockIcon /></SplitTool>
              <SplitTool name="Templates" color="#666"><TemplatesIcon /></SplitTool>
            </ToolGroup>
          </ToolRow>

          <ToolRow>
            <LowerToolGroup>
              <Grip />
              <Tool name="Cursor" pressed><CursorIcon /></Tool>
              <Tool name="Crosshair"><CrossIcon /></Tool>
              <Divider />
              <Tool name="Vertical line"><VLineIcon /></Tool>
              <Tool name="Horizontal line"><HLineIcon /></Tool>
              <Tool name="Trend line"><TrendIcon /></Tool>
              <Tool name="Channel"><ChannelIcon /></Tool>
              <Tool name="Fibonacci"><FiboIcon /></Tool>
              <Tool name="Text"><GlyphA>A</GlyphA></Tool>
              <Tool name="Label"><LabelIcon /></Tool>
              <SplitTool name="Arrows" color="#777"><ShapesIcon /></SplitTool>
            </LowerToolGroup>
            <LowerToolGroup>
              <Grip />
              {["M1", "M5", "M15", "M30", "H1", "H4", "D1", "W1", "MN"].map((t) => (
                <Tool key={t} name={t} pressed={t === "H1"}>{t}</Tool>
              ))}
            </LowerToolGroup>
          </ToolRow>

          <WorkArea>
            <SidePanel>
              <MarketWatch>
                <PanelTitle>
                  <TitleText>気配値表示: 16:24:53</TitleText>
                  <CloseButton type="button" aria-label="Close">
                    <I w={9} h={9}><path d="M1 1l7 7M8 1L1 8" stroke="#000" strokeWidth="2" /></I>
                  </CloseButton>
                </PanelTitle>
                <WatchBody>
                  <QuoteTable>
                    <colgroup>
                      <col width="166" />
                      <col width="108" />
                      <col />
                    </colgroup>
                    <thead>
                      <tr>
                        <HeadCell>通貨ペア</HeadCell>
                        <HeadCell $right>Bid</HeadCell>
                        <HeadCell $right>Ask</HeadCell>
                      </tr>
                    </thead>
                    <tbody>
                      {quotes.map(([symbol, bid, up], i) => (
                        <QuoteRow key={symbol} $selected={i === 0}>
                          <td>
                            <SymbolBox $selected={i === 0}><Trend up={up} />{symbol}</SymbolBox>
                          </td>
                          <Price $tone={i === 0 ? "selected" : up ? "up" : "down"}>{bid}</Price>
                          <td />
                        </QuoteRow>
                      ))}
                    </tbody>
                  </QuoteTable>
                  <ScrollTrack />
                </WatchBody>
                <Tabs>
                  <Tab type="button" $active>通貨ペアリスト</Tab>
                  <Tab type="button">ティックチャート</Tab>
                  <TabEnd />
                </Tabs>
              </MarketWatch>
              <Navigator>
                <PanelTitle><TitleText>ナビゲーター</TitleText></PanelTitle>
                <TreeBox>
                  <TreeButton type="button" $root><TreeIcon $root><RootIcon /></TreeIcon>XMTrading</TreeButton>
                  <ul>
                    {tree.map(([label, icon]) => (
                      <Branch key={label}>
                        <Expander>
                          <I w={7} h={7}><path d="M3.500 0v7M0 3.500h7" stroke="#2a3f8f" strokeWidth="1.300" /></I>
                        </Expander>
                        <Twig />
                        <TreeButton type="button"><TreeIcon>{icon}</TreeIcon>{label}</TreeButton>
                      </Branch>
                    ))}
                  </ul>
                </TreeBox>
              </Navigator>
            </SidePanel>
            <Desktop />

            <ContextMenu>
              <MenuList>
                {entries.map((e, i) =>
                  e ? (
                    <li key={e.label}>
                      <MenuItemButton type="button" $sub={e.sub}>
                        <MenuIcon>{e.icon}</MenuIcon>
                        <MenuLabel>{e.label}</MenuLabel>
                        {e.keys && <Shortcut>{e.keys}</Shortcut>}
                        {e.sub && <SubmenuIcon />}
                      </MenuItemButton>
                    </li>
                  ) : (
                    <MenuRule key={i} />
                  )
                )}
              </MenuList>
              <Highlight />
            </ContextMenu>
          </WorkArea>
        </Screen>
      </Frame>
    </>
  );
}
